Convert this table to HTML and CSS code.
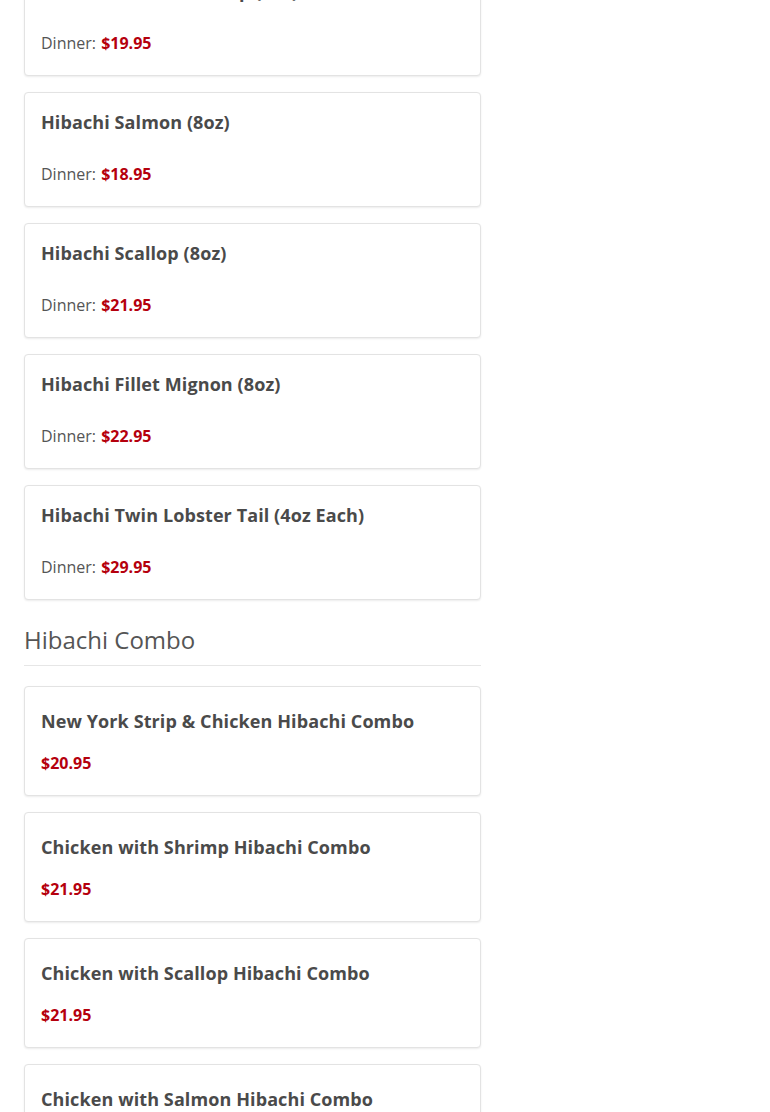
FILE: index.html
```
<!DOCTYPE html>
<html>
<head>
<meta charset="utf-8">
<link rel="stylesheet" href="styles.css">
</head>
<body>
<div class="menu">
  <div class="card">
    <h3 class="title">Hibachi New York Strip (8oz)</h3>
    <p class="price-line">Dinner: <span class="price">$19.95</span></p>
  </div>
  <div class="card">
    <h3 class="title">Hibachi Salmon (8oz)</h3>
    <p class="price-line">Dinner: <span class="price">$18.95</span></p>
  </div>
  <div class="card">
    <h3 class="title">Hibachi Scallop (8oz)</h3>
    <p class="price-line">Dinner: <span class="price">$21.95</span></p>
  </div>
  <div class="card">
    <h3 class="title">Hibachi Fillet Mignon (8oz)</h3>
    <p class="price-line">Dinner: <span class="price">$22.95</span></p>
  </div>
  <div class="card">
    <h3 class="title">Hibachi Twin Lobster Tail (4oz Each)</h3>
    <p class="price-line">Dinner: <span class="price">$29.95</span></p>
  </div>

  <h2 class="section">Hibachi Combo</h2>

  <div class="card combo">
    <h3 class="title">New York Strip &amp; Chicken Hibachi Combo</h3>
    <p class="price-line"><span class="price">$20.95</span></p>
  </div>
  <div class="card combo">
    <h3 class="title">Chicken with Shrimp Hibachi Combo</h3>
    <p class="price-line"><span class="price">$21.95</span></p>
  </div>
  <div class="card combo">
    <h3 class="title">Chicken with Scallop Hibachi Combo</h3>
    <p class="price-line"><span class="price">$21.95</span></p>
  </div>
  <div class="card combo">
    <h3 class="title">Chicken with Salmon Hibachi Combo</h3>
    <p class="price-line"><span class="price">$21.95</span></p>
  </div>
</div>
</body>
</html>
```
FILE: styles.css
```
html, body {
  margin: 0;
  padding: 0;
  background: #fff;
}
body {
  font-family: "Open Sans", "Liberation Sans", sans-serif;
  color: #555;
  overflow: hidden;
}
.menu {
  width: 457px;
  margin: -39px 0 0 24px;
  display: flex;
  flex-direction: column;
}
.card {
  border: 1px solid #e3e3e3;
  border-radius: 4px;
  box-shadow: 0 1px 2px rgba(0,0,0,0.08);
  padding: 16px 16px 20px;
  margin-bottom: 16px;
  background: #fff;
}
.title {
  margin: 0;
  font-size: 18px;
  line-height: 26px;
  font-weight: 700;
  letter-spacing: 0.1px;
  color: #4a4a4a;
}
.price-line {
  margin: 27px 0 0;
  font-size: 16px;
  line-height: 24px;
  color: #555;
  word-spacing: 1px;
}
.price {
  font-weight: 700;
  color: #b5000d;
}
.combo {
  padding-top: 21px;
}
.combo .price-line {
  margin-top: 17px;
}
.section {
  margin: 9px 0 20px;
  padding-bottom: 11px;
  border-bottom: 1px solid #e6e6e6;
  font-size: 24px;
  line-height: 29px;
  font-weight: 400;
  color: #555;
}
```
